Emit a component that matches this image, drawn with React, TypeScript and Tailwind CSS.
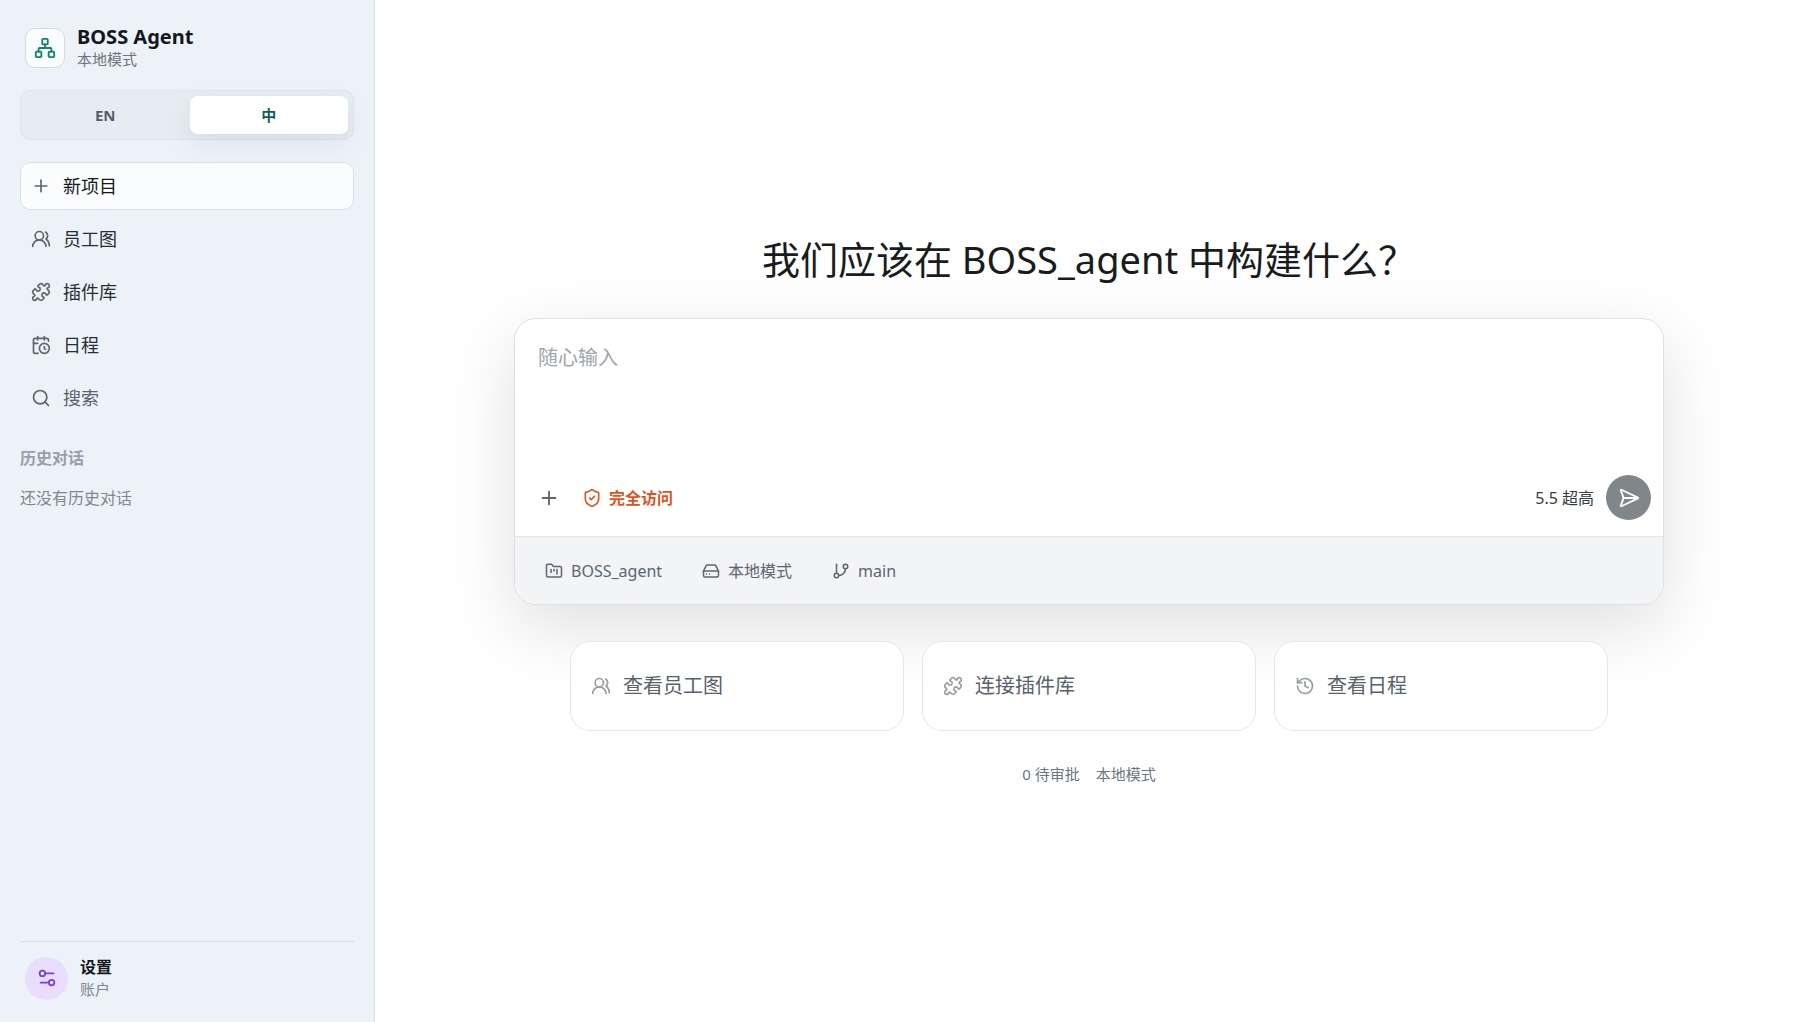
import type { ReactNode } from "react";
import {
  CalendarClock,
  FolderKanban,
  GitBranch,
  HardDrive,
  History,
  Network,
  Plus,
  Puzzle,
  Search,
  SendHorizontal,
  Settings2,
  ShieldCheck,
  UsersRound,
  type LucideIcon,
} from "lucide-react";

function NavItem({ icon: Icon, children, className }: { icon: LucideIcon; children: ReactNode; className: string }) {
  return (
    <button
      type="button"
      className={`flex h-12 w-full items-center gap-3 rounded-[10px] border px-[10px] text-left text-lg leading-6 ${className}`}
    >
      <Icon size={20} className="shrink-0 text-[#5c6570]" />
      {children}
    </button>
  );
}

function Sidebar() {
  return (
    <aside className="flex w-[375px] shrink-0 flex-col border-r border-[#d7dee8] bg-[#edf2f9] px-5">
      <div className="mt-[26px] flex items-center gap-3 px-[5px]">
        <div className="flex size-10 items-center justify-center rounded-[10px] border border-[#d3dbe0] bg-[#f8fcfd] text-[#14806c]">
          <Network size={22} />
        </div>
        <div>
          <h2 className="text-xl leading-[22px] font-bold text-[#14181d]">BOSS Agent</h2>
          <p className="text-[15px] leading-[22px] text-[#6c7580]">本地模式</p>
        </div>
      </div>

      <div className="mt-5 grid h-[50px] grid-cols-2 gap-[5px] rounded-[10px] border border-[#dfe5eb] bg-[#e7ecf2] p-[5px] text-[15px] font-bold">
        <button type="button" className="rounded-lg text-[#535e6c]">
          EN
        </button>
        <button type="button" className="rounded-lg bg-white text-[#115e59] shadow-[0_10px_28px_rgba(15,23,42,0.07)]">
          中
        </button>
      </div>

      <nav className="mt-[22px] flex flex-col gap-[5px]">
        <NavItem icon={Plus} className="border-[#d9e0e7] bg-[#fafcfe] text-[#14181d]">
          新项目
        </NavItem>
        <NavItem icon={UsersRound} className="border-transparent text-[#262d36]">
          员工图
        </NavItem>
        <NavItem icon={Puzzle} className="border-transparent text-[#262d36]">
          插件库
        </NavItem>
        <NavItem icon={CalendarClock} className="border-transparent text-[#262d36]">
          日程
        </NavItem>
        <NavItem icon={Search} className="border-transparent text-[#59626d]">
          搜索
        </NavItem>
      </nav>

      <section className="mt-6 text-base leading-6">
        <h3 className="font-bold text-[#979fa9]">历史对话</h3>
        <p className="mt-4 text-[#7f8791]">还没有历史对话</p>
      </section>

      <div className="mt-auto border-t border-[#d7dee8] pt-[14px] pb-[22px]">
        <button type="button" className="flex items-center gap-3 px-[5px] text-left">
          <span className="flex size-[43px] items-center justify-center rounded-full bg-[#e9dcfd] text-[#7a43d6]">
            <Settings2 size={22} />
          </span>
          <span className="flex flex-col">
            <span className="text-base leading-[22px] font-bold text-[#14181d]">设置</span>
            <span className="text-[15px] leading-[22px] text-[#7f8791]">账户</span>
          </span>
        </button>
      </div>
    </aside>
  );
}

function Composer() {
  return (
    <form
      className="mt-[37px] w-full max-w-[1150px] overflow-hidden rounded-[22px] border border-[#dde1e4] bg-white shadow-[0_22px_70px_rgba(0,0,0,0.13)]"
      onSubmit={(event) => event.preventDefault()}
    >
      <textarea
        aria-label="随心输入"
        placeholder="随心输入"
        className="block h-36 w-full resize-none px-[23px] pt-[25px] text-xl leading-7 text-[#14181d] outline-none placeholder:text-[#9ea5ac]"
      />
      <div className="flex h-[73px] items-start justify-between pt-3 pr-3 pl-[23px]">
        <div className="flex h-[45px] items-center gap-[22px]">
          <button type="button" aria-label="添加" className="text-[#5c6570]">
            <Plus size={22} />
          </button>
          <button type="button" className="flex items-center gap-[7px] text-base leading-6 font-bold text-[#dc5422]">
            <ShieldCheck size={20} />
            完全访问
          </button>
        </div>
        <div className="flex items-center gap-3">
          <button type="button" className="text-base leading-6 text-[#333b45]">
            5.5 超高
          </button>
          <button
            type="submit"
            aria-label="发送"
            className="flex size-[45px] items-center justify-center rounded-full bg-[#81868a] text-white"
          >
            <SendHorizontal size={22} />
          </button>
        </div>
      </div>
      <div className="flex h-[68px] items-center gap-10 border-t border-[#e5e8ea] bg-[#f2f4f6] px-[30px] text-base leading-6 text-[#5c6570]">
        <button type="button" className="flex items-center gap-2">
          <FolderKanban size={18} />
          BOSS_agent
        </button>
        <button type="button" className="flex items-center gap-2">
          <HardDrive size={18} />
          本地模式
        </button>
        <button type="button" className="flex items-center gap-2">
          <GitBranch size={18} />
          main
        </button>
      </div>
    </form>
  );
}

function ActionCard({ icon: Icon, children }: { icon: LucideIcon; children: ReactNode }) {
  return (
    <button
      type="button"
      className="flex h-[90px] items-center gap-3 rounded-[20px] border border-[#e5e8ea] bg-white px-5 text-left text-xl leading-7 text-[#59616b]"
    >
      <Icon size={20} className="shrink-0 text-[#979da3]" />
      {children}
    </button>
  );
}

export default function App() {
  return (
    <div className="flex min-h-screen bg-white font-['Noto_Sans','Noto_Sans_CJK_SC',sans-serif]">
      <Sidebar />
      <main className="flex min-w-0 flex-1 flex-col items-center justify-center px-8">
        <h1 className="text-[38px] leading-[44px] text-[#181c20]">我们应该在 BOSS_agent 中构建什么？</h1>
        <Composer />
        <div className="mt-9 grid w-full max-w-[1038px] grid-cols-3 gap-[18px]">
          <ActionCard icon={UsersRound}>查看员工图</ActionCard>
          <ActionCard icon={Puzzle}>连接插件库</ActionCard>
          <ActionCard icon={History}>查看日程</ActionCard>
        </div>
        <div className="mt-8 flex gap-4 text-[15px] leading-[22px] text-[#6c7580]">
          <span>0 待审批</span>
          <span>本地模式</span>
        </div>
      </main>
    </div>
  );
}
